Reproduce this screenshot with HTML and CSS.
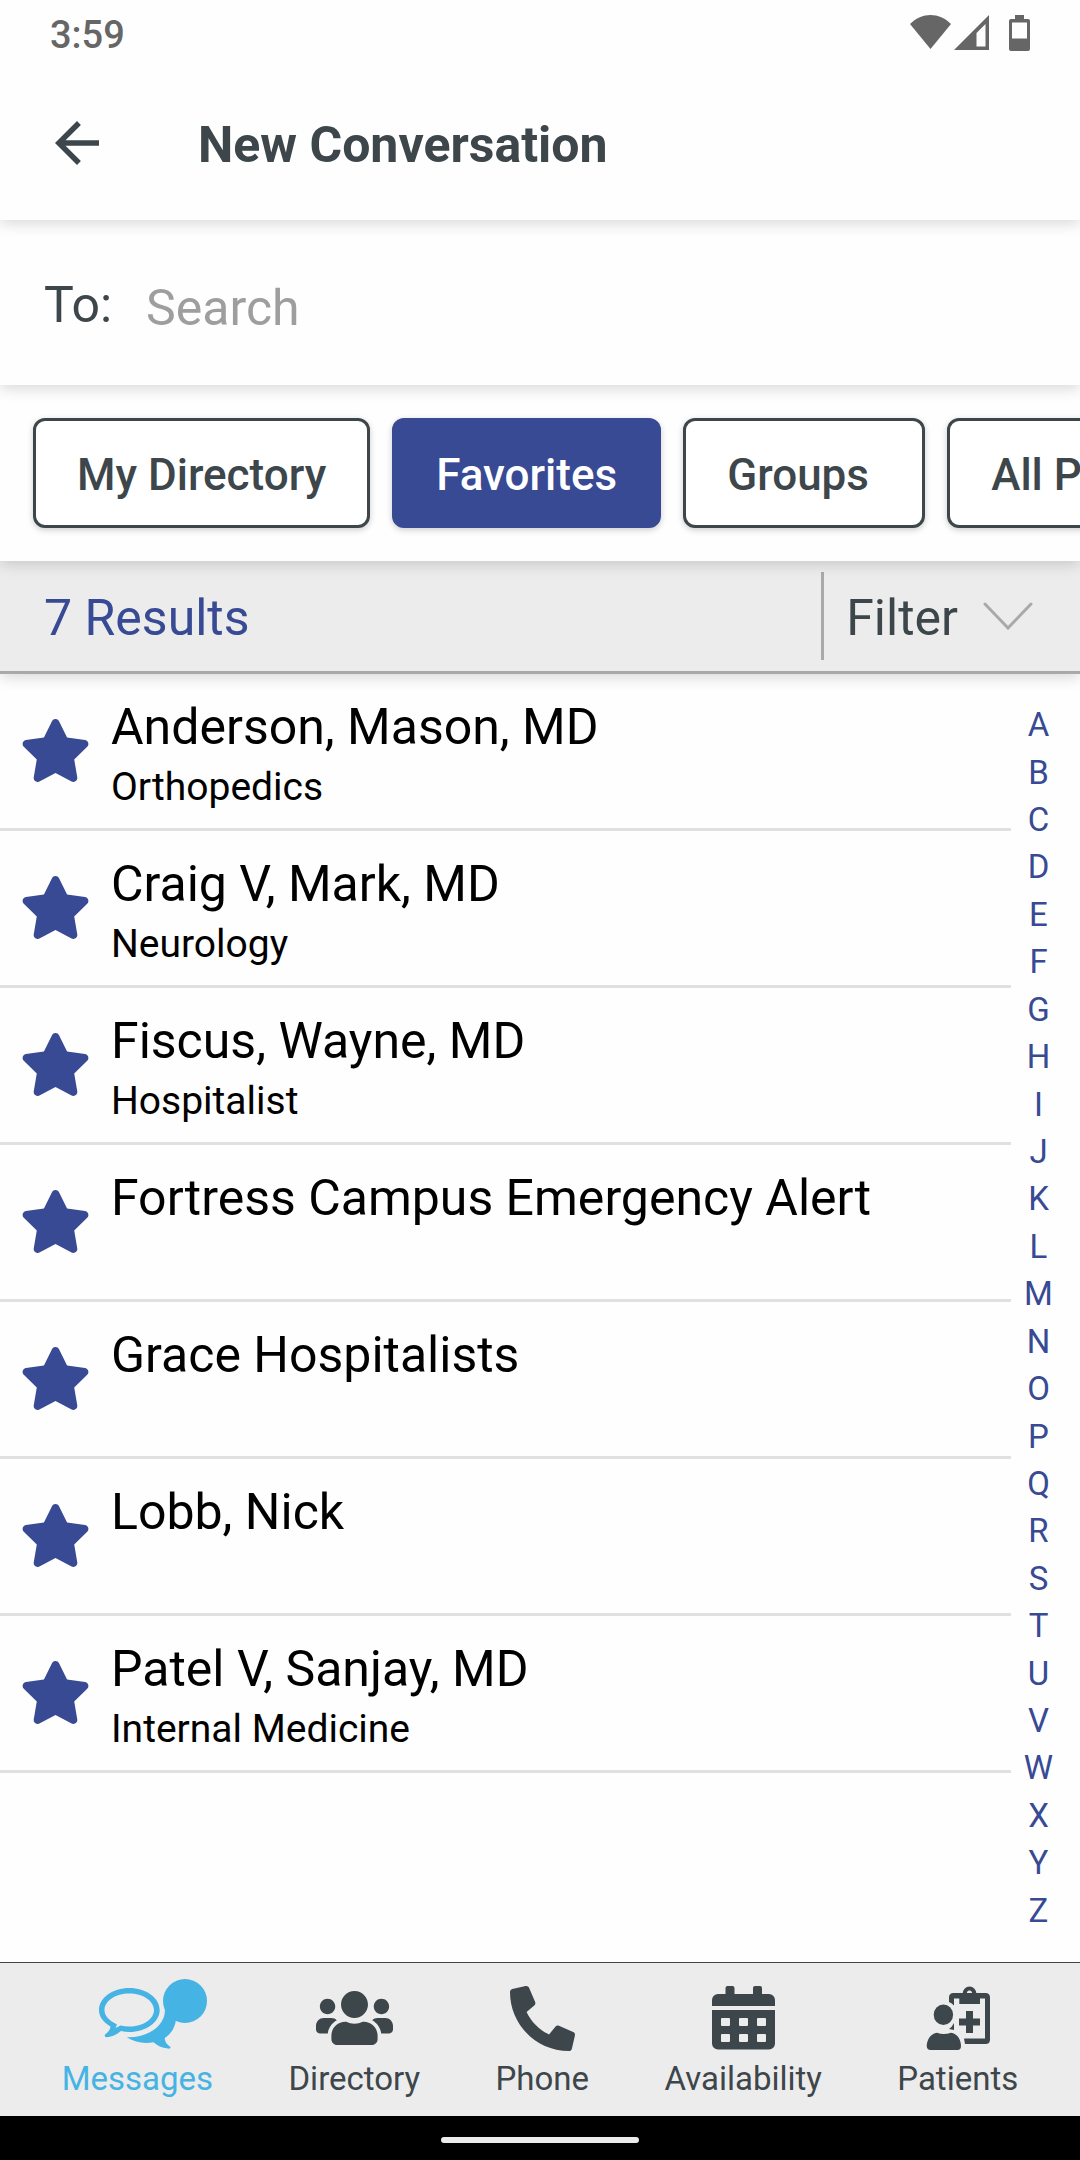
FILE: index.html
```html
<!DOCTYPE html>
<html lang="en">
<head>
    <meta charset="UTF-8">
    <meta name="viewport" content="width=device-width, initial-scale=1.0">
    <title>New Conversation</title>
    <link rel="stylesheet" href="styles.css">
</head>
<body>

    <!-- star shared by every row -->
    <svg class="symbols" width="0" height="0" aria-hidden="true">
        <symbol id="star" viewBox="0 0 576 512">
            <path d="M259.3 17.8L194 150.2 47.9 171.5c-26.2 3.8-36.7 36.1-17.7 54.6l105.7 103-25 145.5c-4.5 26.3 23.2 46 46.4 33.7L288 439.6l130.7 68.7c23.2 12.2 50.9-7.4 46.4-33.7l-25-145.5 105.7-103c19-18.5 8.5-50.8-17.7-54.6L382 150.2 316.7 17.8c-11.7-23.6-45.6-23.9-57.4 0z"/>
        </symbol>
    </svg>

    <div class="app">
        <header class="header">
            <div class="status-bar">
                <span class="time">3:59</span>
                <svg class="status-icons" width="120" height="36" viewBox="0 0 120 36" aria-hidden="true">
                    <path d="M0 9C12-3 29-3 41 9L20.500 34z"/>
                    <path fill-rule="evenodd" d="M79 0V35H44zM75.500 9L66.500 18V31.500H75.500z"/>
                    <path fill-rule="evenodd" d="M105 0h9v4h4a2 2 0 0 1 2 2v28a2 2 0 0 1-2 2h-17a2 2 0 0 1-2-2V6a2 2 0 0 1 2-2h4zM102 7.500v16h15v-16z"/>
                </svg>
            </div>
            <div class="title-bar">
                <button class="back" type="button" aria-label="Back">
                    <svg width="66" height="66" viewBox="0 0 24 24" aria-hidden="true">
                        <path d="M20 11H7.830l5.590-5.590L12 4l-8 8 8 8 1.410-1.410L7.830 13H20v-2z"/>
                    </svg>
                </button>
                <h1>New Conversation</h1>
            </div>
        </header>

        <div class="to-row">
            <label for="to">To:</label>
            <input id="to" type="text" placeholder="Search">
        </div>

        <div class="tabs">
            <button class="tab" type="button">My Directory</button>
            <button class="tab active" type="button">Favorites</button>
            <button class="tab" type="button">Groups</button>
            <button class="tab" type="button">All Providers</button>
        </div>

        <div class="results-bar">
            <span class="count">7 Results</span>
            <button class="filter" type="button">
                <span class="filter-label">Filter</span>
                <svg width="50" height="28" viewBox="0 0 50 28" aria-hidden="true">
                    <path d="M2 2l23 24L48 2"/>
                </svg>
            </button>
        </div>

        <main class="directory">
            <ul class="contacts">
                <li class="contact">
                    <svg class="star"><use href="#star"/></svg>
                    <div>
                        <div class="name">Anderson, Mason, MD</div>
                        <div class="specialty">Orthopedics</div>
                    </div>
                </li>
                <li class="contact">
                    <svg class="star"><use href="#star"/></svg>
                    <div>
                        <div class="name">Craig V, Mark, MD</div>
                        <div class="specialty">Neurology</div>
                    </div>
                </li>
                <li class="contact">
                    <svg class="star"><use href="#star"/></svg>
                    <div>
                        <div class="name">Fiscus, Wayne, MD</div>
                        <div class="specialty">Hospitalist</div>
                    </div>
                </li>
                <li class="contact">
                    <svg class="star"><use href="#star"/></svg>
                    <div>
                        <div class="name">Fortress Campus Emergency Alert</div>
                    </div>
                </li>
                <li class="contact">
                    <svg class="star"><use href="#star"/></svg>
                    <div>
                        <div class="name">Grace Hospitalists</div>
                    </div>
                </li>
                <li class="contact">
                    <svg class="star"><use href="#star"/></svg>
                    <div>
                        <div class="name">Lobb, Nick</div>
                    </div>
                </li>
                <li class="contact">
                    <svg class="star"><use href="#star"/></svg>
                    <div>
                        <div class="name">Patel V, Sanjay, MD</div>
                        <div class="specialty">Internal Medicine</div>
                    </div>
                </li>
            </ul>

            <nav class="index" aria-label="Alphabet">
                <a href="#A">A</a>
                <a href="#B">B</a>
                <a href="#C">C</a>
                <a href="#D">D</a>
                <a href="#E">E</a>
                <a href="#F">F</a>
                <a href="#G">G</a>
                <a href="#H">H</a>
                <a href="#I">I</a>
                <a href="#J">J</a>
                <a href="#K">K</a>
                <a href="#L">L</a>
                <a href="#M">M</a>
                <a href="#N">N</a>
                <a href="#O">O</a>
                <a href="#P">P</a>
                <a href="#Q">Q</a>
                <a href="#R">R</a>
                <a href="#S">S</a>
                <a href="#T">T</a>
                <a href="#U">U</a>
                <a href="#V">V</a>
                <a href="#W">W</a>
                <a href="#X">X</a>
                <a href="#Y">Y</a>
                <a href="#Z">Z</a>
            </nav>
        </main>

        <nav class="bottom-nav">
            <a class="nav-item current" href="#messages">
                <span class="nav-icon">
                    <svg width="77" height="62" viewBox="0 10 77 62" aria-hidden="true">
                        <path fill-rule="evenodd" d="M30.300 11C47 11 60.700 20.800 60.700 33S47 55 30.300 55Q26 55 22 54Q15 60 7.500 60.300Q5 60 6 57.500Q11 54 11.500 49.500C4 45 0 39.500 0 33 0 20.800 13.600 11 30.300 11zM30.300 16.500C16.500 16.500 5.500 24 5.500 33 5.500 39 9.500 43 18 47.500L16.500 51L21.500 48.500Q26 49.500 30.300 49.500C44 49.500 55 42 55 33S44 16.500 30.300 16.500z"/>
                        <path d="M27.700 60.300C47 61 66 50 66 33V28L77 40C77 49 73 56 65.700 61C66 66 69 68 71.500 70Q72 72 69 71.600C63 71 58 68.500 54.500 65.300C45 67 36 65.500 27.700 60.300z"/>
                    </svg>
                    <span class="badge"></span>
                </span>
                Messages
            </a>
            <a class="nav-item" href="#directory">
                <span class="nav-icon">
                    <svg width="77" height="62" viewBox="0 0 640 512" aria-hidden="true">
                        <path d="M96 224c35.300 0 64-28.700 64-64s-28.700-64-64-64-64 28.700-64 64 28.700 64 64 64zm448 0c35.300 0 64-28.700 64-64s-28.700-64-64-64-64 28.700-64 64 28.700 64 64 64zm32 32h-64c-17.600 0-33.500 7.100-45.100 18.600 40.300 22.100 68.900 62 75.100 109.400h66c17.700 0 32-14.300 32-32v-32c0-35.300-28.700-64-64-64zm-256 0c61.900 0 112-50.100 112-112S381.900 32 320 32 208 82.100 208 144s50.100 112 112 112zm76.800 32h-8.300c-20.800 10-43.900 16-68.500 16s-47.600-6-68.500-16h-8.300C179.600 288 128 339.600 128 403.200V432c0 26.500 21.500 48 48 48h288c26.500 0 48-21.500 48-48v-28.800c0-63.600-51.600-115.200-115.200-115.200zm-223.700-13.400C161.500 263.100 145.600 256 128 256H64c-35.300 0-64 28.700-64 64v32c0 17.700 14.300 32 32 32h65.900c6.300-47.400 34.900-87.300 75.200-109.400z"/>
                    </svg>
                </span>
                Directory
            </a>
            <a class="nav-item" href="#phone">
                <span class="nav-icon">
                    <svg width="65" height="65" viewBox="0 0 512 512" aria-hidden="true">
                        <path transform="matrix(-1 0 0 1 512 0)" d="M493.400 24.600l-104-24c-11.300-2.600-22.900 3.300-27.500 13.900l-48 112c-4.200 9.800-1.400 21.300 6.900 28l60.600 49.600c-36 76.700-98.900 140.500-177.200 177.200l-49.600-60.600c-6.800-8.300-18.200-11.100-28-6.900l-112 48C3.900 366.500-2 378.100.6 389.400l24 104C27.100 504.200 36.700 512 48 512c256.100 0 464-207.500 464-464 0-11.200-7.700-20.900-18.600-23.400z"/>
                    </svg>
                </span>
                Phone
            </a>
            <a class="nav-item" href="#availability">
                <span class="nav-icon">
                    <svg width="63" height="64" viewBox="0 0 63 64" aria-hidden="true">
                        <path d="M0 20v-6a6 6 0 0 1 6-6h7.500V2q0-2 2-2h5q2 0 2 2v6h18.500V2q0-2 2-2h5q2 0 2 2v6h7a6 6 0 0 1 6 6v6z"/>
                        <path fill-rule="evenodd" d="M0 24h63v33.500a6 6 0 0 1-6 6H6a6 6 0 0 1-6-6zM10 32q-1 0-1 1v6q0 1 1 1h7q1 0 1-1v-6q0-1-1-1zM28 32q-1 0-1 1v6q0 1 1 1h7q1 0 1-1v-6q0-1-1-1zM46 32q-1 0-1 1v6q0 1 1 1h7q1 0 1-1v-6q0-1-1-1zM10 48q-1 0-1 1v6q0 1 1 1h7q1 0 1-1v-6q0-1-1-1zM28 48q-1 0-1 1v6q0 1 1 1h7q1 0 1-1v-6q0-1-1-1zM46 48q-1 0-1 1v6q0 1 1 1h7q1 0 1-1v-6q0-1-1-1z"/>
                    </svg>
                </span>
                Availability
            </a>
            <a class="nav-item" href="#patients">
                <span class="nav-icon">
                    <svg width="64" height="64" viewBox="0 0 64 64" aria-hidden="true">
                        <path d="M23 16v-4.500Q23 7 27.500 7h32q4.500 0 4.500 4.500v42q0 4.500-4.500 4.500H39l-1-5.500h21v-40H28V19.500Q26 17 23 16zM28 37v7l-5-1q3-2 5-6z"/>
                        <path fill-rule="evenodd" d="M33.300 18V8h3.200a7 7.500 0 0 1 14 0H54v10zM43.400 4.500a2.700 2.700 0 1 0 .1 0z"/>
                        <path d="M40 25h7v7.500h7v7h-7V47h-7v-7.500h-7v-7h7z"/>
                        <ellipse cx="17.400" cy="28.800" rx="9.700" ry="10.300"/>
                        <path d="M11 46.700Q17.500 49.500 25 46.700C31 47.500 35 53 35 60Q35 64 31.500 64H4.500Q1 64 .7 60C1 53 5 47.500 11 46.700z"/>
                    </svg>
                </span>
                Patients
            </a>
        </nav>

        <div class="gesture-bar"><span class="handle"></span></div>
    </div>

</body>
</html>
```
FILE: styles.css
```css
* {
    box-sizing: border-box;
}

body {
    font-family: Roboto, "Liberation Sans", sans-serif;
    margin: 0;
    background-color: #fefefe;
    color: #3d464b;
    font-size: 50px;
}

button, input {
    font-family: inherit;
    font-size: inherit;
    color: inherit;
    background: none;
    border: none;
    padding: 0;
    margin: 0;
}

a {
    color: inherit;
    text-decoration: none;
}

svg {
    display: block;
    fill: currentColor;
}

.symbols {
    position: absolute;
}

.app {
    display: flex;
    flex-direction: column;
    min-height: 100vh;
}

/* Each bar casts its shadow on the one below */
.header, .to-row, .tabs, .results-bar {
    position: relative;
    background-color: #fefefe;
    box-shadow: 0 3px 14px rgba(0, 0, 0, 0.16);
}

.header {
    z-index: 4;
}

.status-bar {
    display: flex;
    justify-content: space-between;
    align-items: center;
    height: 66px;
    padding: 0 50px;
    color: #666;
}

.time {
    padding-top: 4px;
    font-size: 38px;
    font-weight: 500;
}

.title-bar {
    display: flex;
    align-items: center;
    gap: 88px;
    height: 154px;
    padding: 0 44px;
}

h1 {
    margin: 0;
    padding-top: 4px;
    font-size: 50px;
    font-weight: 700;
}

.to-row {
    z-index: 3;
    display: flex;
    align-items: center;
    gap: 34px;
    height: 165px;
    padding: 4px 44px 0;
}

.to-row input {
    flex: 1;
    min-width: 0;
    padding-top: 6px;
    outline: none;
}

.to-row input::placeholder {
    color: #9e9e9e;
}

.tabs {
    z-index: 2;
    display: flex;
    gap: 22px;
    padding: 33px;
    overflow: hidden;
}

.tab {
    flex: none;
    min-width: 242px;
    height: 110px;
    padding: 4px 41px 0;
    border: 3px solid #3d464b;
    border-radius: 12px;
    background-color: #fff;
    box-shadow: 0 2px 6px rgba(0, 0, 0, 0.2);
    font-size: 44px;
    font-weight: 500;
    text-align: left;
}

.tab.active {
    background-color: #374a93;
    border-color: #374a93;
    color: #fff;
}

.results-bar {
    z-index: 1;
    display: flex;
    justify-content: space-between;
    align-items: center;
    height: 113px;
    padding: 0 47px 0 44px;
    background-color: #ececec;
    border-bottom: 3px solid #a8aaaa;
}

.count, .filter-label {
    padding-top: 4px;
}

.count {
    color: #374a93;
}

.filter {
    display: flex;
    align-items: center;
    gap: 25px;
    height: 88px;
    padding-left: 22px;
    border-left: 3px solid #a8aaaa;
}

.filter svg {
    fill: none;
    stroke: #a8aaaa;
    stroke-width: 3;
    stroke-linecap: round;
}

.directory {
    flex: 1;
    display: flex;
}

.contacts {
    flex: 1;
    margin: 0;
    padding: 0;
    list-style: none;
    color: #000;
}

.contact {
    display: flex;
    gap: 20px;
    min-height: 157px;
    padding: 23px 20px 11px;
    border-bottom: 3px solid #e0e0e0;
    line-height: 60px;
}

.star {
    width: 71px;
    height: 63px;
    margin-top: 22px;
    color: #374a93;
}

.specialty {
    font-size: 39px;
}

.index {
    display: flex;
    flex-direction: column;
    width: 69px;
    padding: 27px 14px 28px 0;
    color: #374a93;
    font-size: 33px;
    text-align: center;
}

.index a {
    flex: 1;
    display: flex;
    align-items: center;
    justify-content: center;
}

.bottom-nav {
    display: flex;
    justify-content: space-around;
    padding: 22px 24px 17px;
    background-color: #ececec;
    border-top: 1px solid #3d464b;
}

.nav-item {
    display: flex;
    flex-direction: column;
    align-items: center;
    gap: 8px;
    font-size: 33px;
    line-height: 40px;
}

.nav-item.current {
    color: #45b3e3;
}

.nav-icon {
    position: relative;
    display: flex;
    align-items: center;
    height: 66px;
}

.badge {
    position: absolute;
    top: -6px;
    left: 64px;
    width: 44px;
    height: 44px;
    border-radius: 50%;
    background-color: #45b3e3;
}

.gesture-bar {
    display: flex;
    justify-content: center;
    align-items: center;
    height: 44px;
    padding-top: 4px;
    background-color: #000;
}

.handle {
    width: 198px;
    height: 6px;
    border-radius: 3px;
    background-color: #ececec;
}
```
